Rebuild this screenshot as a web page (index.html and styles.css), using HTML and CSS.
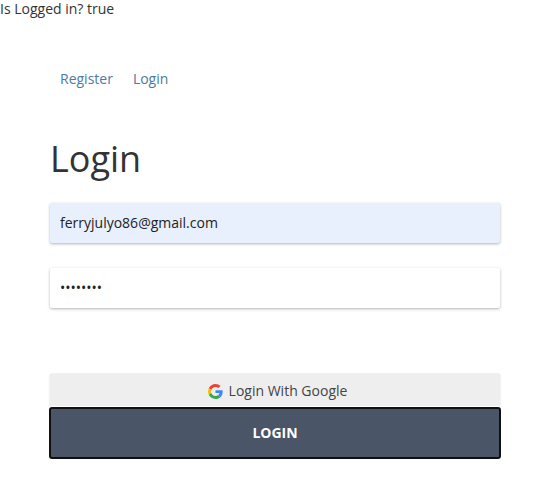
FILE: index.html
```html
<!DOCTYPE html>
<html lang="en">
<head>
<meta charset="utf-8">
<title>Login</title>
<link rel="stylesheet" href="styles.css">
</head>
<body>
<div class="status">Is Logged in? true</div>
<main class="page">
<nav class="nav"><a href="#">Register</a><a href="#">Login</a></nav>
<h1 class="title">Login</h1>
<form class="form">
<input class="field filled" type="text" value="ferryjulyo86@gmail.com" aria-label="Email">
<input class="field" type="password" value="password" aria-label="Password">
<button class="google" type="button">
<svg class="logo" viewBox="0 0 48 48" aria-hidden="true">
<path fill="#EA4335" d="M24 9.5c3.54 0 6.71 1.22 9.21 3.6l6.85-6.85C35.9 2.38 30.47 0 24 0 14.62 0 6.51 5.38 2.56 13.22l7.98 6.19C12.43 13.72 17.74 9.5 24 9.5z"/>
<path fill="#4285F4" d="M46.98 24.55c0-1.57-.15-3.09-.38-4.55H24v9.02h12.94c-.58 2.96-2.26 5.48-4.78 7.18l7.73 6c4.51-4.18 7.09-10.36 7.09-17.65z"/>
<path fill="#FBBC05" d="M10.53 28.59A14.5 14.5 0 0 1 10.53 19.41l-7.98-6.19A24 24 0 0 0 0 24c0 3.88.92 7.54 2.56 10.78z"/>
<path fill="#34A853" d="M24 48c6.48 0 11.93-2.13 15.89-5.81l-7.73-6c-2.15 1.45-4.92 2.3-8.16 2.3-6.26 0-11.57-4.22-13.47-9.91l-7.98 6.19C6.51 42.62 14.62 48 24 48z"/>
</svg><span>Login With Google</span></button>
<button class="submit" type="button">LOGIN</button>
</form>
</main>
</body>
</html>
```

FILE: styles.css
```css
* { box-sizing: border-box; }
body {
  margin: 0;
  background: #fff;
  color: #333;
  font: 14px/20px "Open Sans", sans-serif;
}
.status { height: 20px; margin-top: -1px; }
.page { width: 450px; margin: 50px 0 0 50px; }
.nav { display: flex; gap: 20px; padding-left: 10px; }
.nav a { color: #4a7aa7; text-decoration: none; }
.title { margin: 50px 0 24px; font-size: 36px; line-height: 40px; font-weight: 400; }
.form { display: flex; flex-direction: column; }
.field {
  width: 100%;
  height: 40px;
  margin: 0 0 25px;
  padding: 0 10px 2px;
  border: 0;
  border-radius: 2px;
  background: #fff;
  color: #222;
  font: inherit;
  box-shadow: 0 1px 3px rgba(0, 0, 0, .3);
}
.filled { background: #e8f0fe; }
.google {
  display: flex;
  justify-content: center;
  align-items: center;
  gap: 6px;
  height: 33px;
  margin-top: 41px;
  padding: 0 0 0 5px;
  border: 0;
  border-radius: 2px;
  background: #eee;
  color: #444;
  font: inherit;
  box-shadow: 0 0 2px rgba(0, 0, 0, .2);
}
.logo { width: 15px; height: 15px; margin-top: 2px; }
.submit {
  position: relative;
  height: 52px;
  margin: 0 -1px;
  padding: 0;
  border: 2px solid #101010;
  border-radius: 3px;
  background: #4a5568;
  color: #fff;
  font: inherit;
  font-weight: 700;
  box-shadow: 0 0 0 1px #fff;
}
```
